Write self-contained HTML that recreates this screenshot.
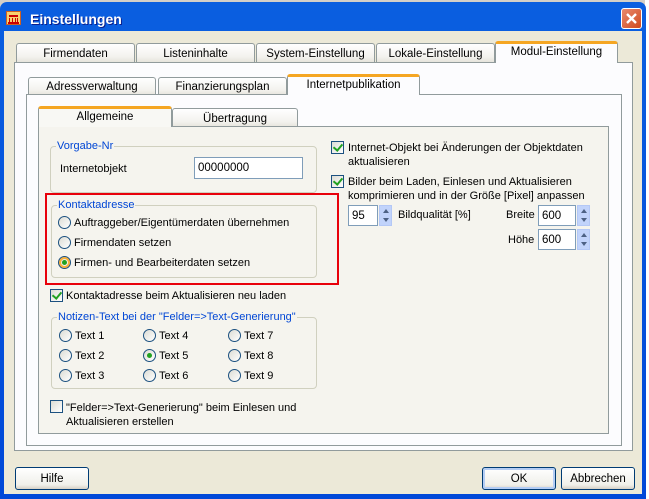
<!DOCTYPE html>
<html><head><meta charset="utf-8"><style>
*{margin:0;padding:0;box-sizing:border-box}
body{width:649px;height:499px;background:#d4d0c8;position:relative;overflow:hidden;font-family:"Liberation Sans",Tahoma,sans-serif;font-size:11px;color:#000}
.a{position:absolute}
.t{position:absolute;white-space:nowrap;line-height:13px}
.win{left:0;top:2px;width:646px;height:497px;background:linear-gradient(#0a5fe0,#0048d8);border-radius:7px 7px 0 0}
.client{left:4px;top:31px;width:638px;height:463px;background:#ece9d8}
.tab{position:absolute;background:linear-gradient(#fff,#f3f2ee 70%,#e6e4dc);border:1px solid #919b9c;border-bottom:none;border-radius:3px 3px 0 0;text-align:center;line-height:20px;font-size:11.5px}
.tab.sel{background:#fcfcfe;border-top:3px solid #f5a623;line-height:17px;z-index:2}
.panel{position:absolute;border:1px solid #919b9c;background:#fcfcfe}
.grp{position:absolute;border:1px solid #d0d0bf;border-radius:4px}
.gl{position:absolute;top:-7px;left:5px;background:#fcfcfe;color:#0046d5;padding:0 1px;line-height:13px}
.rb{position:absolute;width:13px;height:13px;border-radius:50%;border:1px solid #1c5180;background:linear-gradient(135deg,#dcdcd4,#fff)}
.rb.on::after{content:"";position:absolute;left:3px;top:3px;width:5px;height:5px;border-radius:50%;background:#21a121}
.rb.on.o{border-color:#1c5180;box-shadow:inset 0 0 0 2px #f8b03a}
.cb{position:absolute;width:13px;height:13px;border:1px solid #1c5180;background:linear-gradient(135deg,#dcdcd4,#fff)}
.cb.on::after{content:"";position:absolute;left:3px;top:0px;width:4px;height:7px;border:solid #21a121;border-width:0 2px 2px 0;transform:rotate(40deg)}
.inp{position:absolute;border:1px solid #7f9db9;background:#fff;padding-left:3px;line-height:20px;font-size:11.5px}
.spin{position:absolute;width:13px;background:#c1d3fb;border:1px solid #b4c8f6}
.spin i{position:absolute;left:3px;width:0;height:0;border-left:3px solid transparent;border-right:3px solid transparent}
.btn{position:absolute;border:1px solid #003c74;border-radius:3px;background:linear-gradient(#fff,#f0f0ea 80%,#d6d0c5);text-align:center;line-height:22px;font-size:11.5px}
</style></head><body>
<div class="a" style="left:645px;top:0;width:4px;height:499px;background:#fff"></div>
<div class="a win"></div>
<div class="a" style="left:6px;top:11px;width:15px;height:14px;background:#f8d070;border:1px solid #d06020"><div class="a" style="left:2px;top:3px;width:9px;height:2px;background:#c00"></div><div class="a" style="left:2px;top:6px;width:1px;height:4px;background:#c00;box-shadow:3px 0 #c00,6px 0 #c00,8px 0 #c00"></div><div class="a" style="left:1px;top:10px;width:11px;height:2px;background:#c00"></div></div>
<div class="t" style="left:30px;top:11px;color:#fff;font-weight:bold;font-size:14px;line-height:17px;text-shadow:1px 1px #0a1e8c">Einstellungen</div>
<div class="a" style="left:621px;top:8px;width:21px;height:21px;border:1px solid #fff;border-radius:3px;background:linear-gradient(135deg,#e98a6e,#d04a1e)"><svg width="19" height="19" style="position:absolute;left:0;top:0"><path d="M5 5L14 14M14 5L5 14" stroke="#fff" stroke-width="2.4"/></svg></div>
<div class="a client"></div>

<div class="tab" style="left:16px;top:43px;width:119px;height:19px">Firmendaten</div>
<div class="tab" style="left:136px;top:43px;width:119px;height:19px">Listeninhalte</div>
<div class="tab" style="left:256px;top:43px;width:119px;height:19px">System-Einstellung</div>
<div class="tab" style="left:376px;top:43px;width:119px;height:19px">Lokale-Einstellung</div>
<div class="panel" style="left:14px;top:62px;width:619px;height:389px"></div>
<div class="tab sel" style="left:495px;top:41px;width:123px;height:22px">Modul-Einstellung</div>

<div class="tab" style="left:28px;top:77px;width:128px;height:18px;line-height:18px">Adressverwaltung</div>
<div class="tab" style="left:158px;top:77px;width:129px;height:18px;line-height:18px">Finanzierungsplan</div>
<div class="panel" style="left:26px;top:94px;width:596px;height:352px"></div>
<div class="tab sel" style="left:287px;top:74px;width:133px;height:21px">Internetpublikation</div>

<div class="tab" style="left:172px;top:108px;width:126px;height:19px">Übertragung</div>
<div class="panel" style="left:38px;top:126px;width:571px;height:308px;background:#f5f4ee"></div>
<div class="tab sel" style="left:38px;top:106px;width:134px;height:21px;background:#f8f8f4">Allgemeine</div>

<div class="grp" style="left:50px;top:146px;width:267px;height:47px"><span class="gl" style="background:#f5f4ee">Vorgabe-Nr</span></div>
<div class="t" style="left:60px;top:163px">Internetobjekt</div>
<div class="inp" style="left:194px;top:157px;width:109px;height:22px">00000000</div>

<div class="a" style="left:45px;top:193px;width:294px;height:92px;border:2px solid #e8000a"></div>
<div class="grp" style="left:51px;top:205px;width:266px;height:73px"><span class="gl" style="background:#f5f4ee">Kontaktadresse</span></div>
<div class="rb" style="left:58px;top:216px"></div><div class="t" style="left:74px;top:217px">Auftraggeber/Eigentümerdaten übernehmen</div>
<div class="rb" style="left:58px;top:236px"></div><div class="t" style="left:74px;top:237px">Firmendaten setzen</div>
<div class="rb on o" style="left:58px;top:256px"></div><div class="t" style="left:74px;top:257px">Firmen- und Bearbeiterdaten setzen</div>

<div class="cb on" style="left:50px;top:289px"></div><div class="t" style="left:66px;top:290px">Kontaktadresse beim Aktualisieren neu laden</div>

<div class="grp" style="left:51px;top:317px;width:266px;height:72px"><span class="gl" style="background:#f5f4ee">Notizen-Text bei der "Felder=&gt;Text-Generierung"</span></div>
<div class="rb" style="left:59px;top:329px"></div><div class="t" style="left:75px;top:330px">Text 1</div>
<div class="rb" style="left:59px;top:349px"></div><div class="t" style="left:75px;top:350px">Text 2</div>
<div class="rb" style="left:59px;top:369px"></div><div class="t" style="left:75px;top:370px">Text 3</div>
<div class="rb" style="left:143px;top:329px"></div><div class="t" style="left:159px;top:330px">Text 4</div>
<div class="rb on" style="left:143px;top:349px"></div><div class="t" style="left:159px;top:350px">Text 5</div>
<div class="rb" style="left:143px;top:369px"></div><div class="t" style="left:159px;top:370px">Text 6</div>
<div class="rb" style="left:228px;top:329px"></div><div class="t" style="left:244px;top:330px">Text 7</div>
<div class="rb" style="left:228px;top:349px"></div><div class="t" style="left:244px;top:350px">Text 8</div>
<div class="rb" style="left:228px;top:369px"></div><div class="t" style="left:244px;top:370px">Text 9</div>

<div class="cb" style="left:50px;top:400px"></div>
<div class="t" style="left:66px;top:401px;line-height:14px">"Felder=&gt;Text-Generierung" beim Einlesen und<br>Aktualisieren erstellen</div>

<div class="cb on" style="left:331px;top:141px"></div>
<div class="t" style="left:348px;top:141px;line-height:14px">Internet-Objekt bei Änderungen der Objektdaten<br>aktualisieren</div>
<div class="cb on" style="left:331px;top:175px"></div>
<div class="t" style="left:348px;top:175px;line-height:14px">Bilder beim Laden, Einlesen und Aktualisieren<br>komprimieren und in der Größe [Pixel] anpassen</div>

<div class="inp" style="left:348px;top:205px;width:30px;height:21px">95</div>
<div class="spin" style="left:379px;top:205px;height:21px"><i style="top:3px;border-bottom:4px solid #4d6185"></i><i style="top:12px;border-top:4px solid #4d6185"></i></div>
<div class="t" style="left:398px;top:209px">Bildqualität [%]</div>
<div class="t" style="left:506px;top:209px">Breite</div>
<div class="inp" style="left:538px;top:205px;width:38px;height:21px">600</div>
<div class="spin" style="left:577px;top:205px;height:21px"><i style="top:3px;border-bottom:4px solid #4d6185"></i><i style="top:12px;border-top:4px solid #4d6185"></i></div>
<div class="t" style="left:508px;top:234px">Höhe</div>
<div class="inp" style="left:538px;top:229px;width:38px;height:21px">600</div>
<div class="spin" style="left:577px;top:229px;height:21px"><i style="top:3px;border-bottom:4px solid #4d6185"></i><i style="top:12px;border-top:4px solid #4d6185"></i></div>

<div class="btn" style="left:15px;top:467px;width:74px;height:23px">Hilfe</div>
<div class="btn" style="left:482px;top:467px;width:74px;height:23px;box-shadow:inset 0 0 0 2px #b4cdf4">OK</div>
<div class="btn" style="left:561px;top:467px;width:74px;height:23px">Abbrechen</div>
</body></html>
